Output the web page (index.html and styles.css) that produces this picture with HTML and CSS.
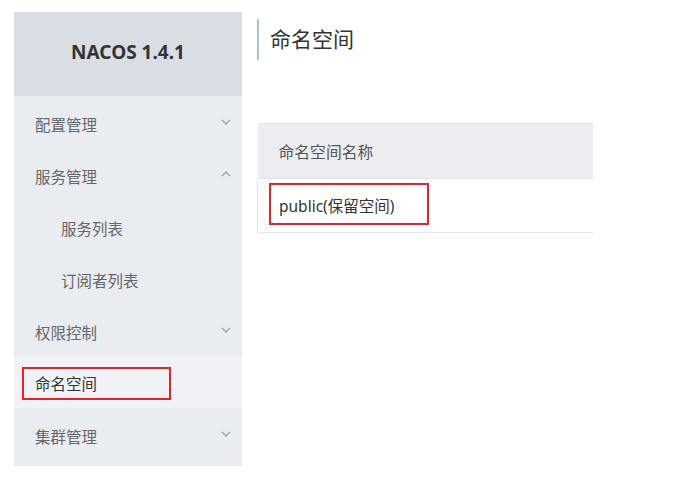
FILE: index.html
```html
<!DOCTYPE html>
<html lang="zh-CN">
<head>
    <meta charset="UTF-8">
    <meta name="viewport" content="width=device-width, initial-scale=1.0">
    <title>Nacos - 命名空间</title>
    <link rel="stylesheet" href="styles.css">
</head>
<body>
    <div class="page">
        <aside class="sidebar">
            <div class="logo">NACOS 1.4.1</div>
            <ul class="menu">
                <li class="item">配置管理
                    <svg class="arrow" viewBox="0 0 10 6"><path d="M1 1 L5 5 L9 1"/></svg>
                </li>
                <li class="item">服务管理
                    <svg class="arrow" viewBox="0 0 10 6"><path d="M1 5 L5 1 L9 5"/></svg>
                </li>
                <li class="item sub">服务列表</li>
                <li class="item sub">订阅者列表</li>
                <li class="item">权限控制
                    <svg class="arrow" viewBox="0 0 10 6"><path d="M1 1 L5 5 L9 1"/></svg>
                </li>
                <li class="item active"><span class="mark">命名空间</span></li>
                <li class="item">集群管理
                    <svg class="arrow" viewBox="0 0 10 6"><path d="M1 1 L5 5 L9 1"/></svg>
                </li>
            </ul>
        </aside>

        <main class="main">
            <h1 class="title">命名空间</h1>
            <table class="grid">
                <thead>
                    <tr><th>命名空间名称</th></tr>
                </thead>
                <tbody>
                    <tr><td><span class="mark cell">public(保留空间)</span></td></tr>
                </tbody>
            </table>
        </main>
    </div>
</body>
</html>
```

FILE: styles.css
```css
body {
    margin: 0;
    background: #fff;
    font-family: "Noto Sans", "Noto Sans CJK SC", sans-serif;
    color: #666;
}
.page {
    display: flex;
    gap: 15px;
    padding: 12px 0 0 14px;
}
.sidebar {
    width: 228px;
    background: #e9ecf1;
    padding-bottom: 6px;
}
.logo {
    height: 84px;
    line-height: 80px;
    text-align: center;
    background: #d9dde4;
    color: #333;
    font-size: 19px;
    font-weight: bold;
}
.menu {
    list-style: none;
    margin: 0;
    padding: 0;
}
.item {
    display: flex;
    align-items: center;
    justify-content: space-between;
    box-sizing: border-box;
    height: 52px;
    padding: 5px 11px 0 21px;
    font-size: 15.5px;
    color: #666;
}
.item.sub {
    padding-left: 47px;
}
.item.active {
    background: #f1f2f6;
    padding: 2px 0 0 8px;
    color: #333;
}
.arrow {
    width: 10px;
    height: 6px;
    margin-top: -5px;
    fill: none;
    stroke: #999;
    stroke-width: 1.1;
}
.mark {
    display: inline-flex;
    align-items: center;
    box-sizing: border-box;
    height: 33px;
    width: 149px;
    padding: 1px 0 0 11px;
    border: 2px solid #e8202b;
}
.main {
    width: 336px;
}
.title {
    margin: 7px 0 0;
    height: 41px;
    line-height: 41px;
    padding-left: 11px;
    border-left: 2px solid #a3c3e3;
    font-size: 21px;
    font-weight: normal;
    color: #333;
}
.grid {
    width: 100%;
    margin-top: 63px;
    border-collapse: collapse;
    font-size: 15.8px;
}
.grid th {
    height: 54px;
    padding: 0 0 0 21px;
    text-align: left;
    font-weight: normal;
    color: #555;
    background: #ebedf1;
    border-top: 1px solid #e3e5ea;
    border-bottom: 1px solid #e3e5ea;
}
.grid td {
    height: 50px;
    padding: 0 0 3px 11px;
    color: #333;
    font-size: 15.5px;
    border-left: 1px solid #e6e7eb;
    border-bottom: 1px solid #e6e7eb;
}
.mark.cell {
    width: 160px;
    height: 42px;
    padding: 2px 0 0 8px;
}
```
